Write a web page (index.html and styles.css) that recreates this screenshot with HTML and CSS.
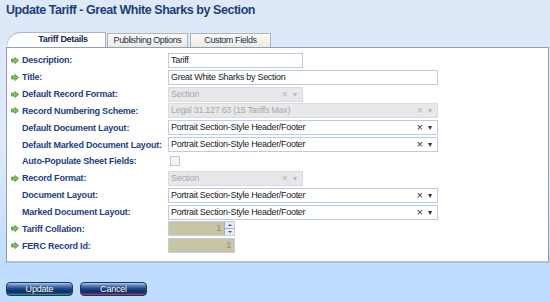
FILE: index.html
```html
<!DOCTYPE html>
<html>
<head>
  <title>Update Tariff</title>
  <link rel="stylesheet" href="styles.css">
</head>
<body>
  <div class="page">
    <h1 class="page-title">Update Tariff - Great White Sharks by Section</h1>

    <div class="tabs">
      <div class="tab tab-active">Tariff Details</div>
      <div class="tab">Publishing Options</div>
      <div class="tab">Custom Fields</div>
    </div>

    <div class="panel">
      <div class="form-row">
        <span class="req"><svg width="8" height="7" viewBox="0 0 8 7"><path d="M0.5 2h3.5V0.5l3.5 3-3.5 3V5H0.5z" fill="#7cc35a" stroke="#4f8f34" stroke-width="0.8"/></svg></span>
        <label>Description:</label>
        <div class="field"><div class="input short">Tariff</div></div>
      </div>
      <div class="form-row">
        <span class="req"><svg width="8" height="7" viewBox="0 0 8 7"><path d="M0.5 2h3.5V0.5l3.5 3-3.5 3V5H0.5z" fill="#7cc35a" stroke="#4f8f34" stroke-width="0.8"/></svg></span>
        <label>Title:</label>
        <div class="field"><div class="input wide">Great White Sharks by Section</div></div>
      </div>
      <div class="form-row">
        <span class="req"><svg width="8" height="7" viewBox="0 0 8 7"><path d="M0.5 2h3.5V0.5l3.5 3-3.5 3V5H0.5z" fill="#7cc35a" stroke="#4f8f34" stroke-width="0.8"/></svg></span>
        <label>Default Record Format:</label>
        <div class="field"><div class="input select short disabled"><span class="val">Section</span><span class="clr">×</span><span class="arr">▾</span></div></div>
      </div>
      <div class="form-row">
        <span class="req"><svg width="8" height="7" viewBox="0 0 8 7"><path d="M0.5 2h3.5V0.5l3.5 3-3.5 3V5H0.5z" fill="#7cc35a" stroke="#4f8f34" stroke-width="0.8"/></svg></span>
        <label>Record Numbering Scheme:</label>
        <div class="field"><div class="input select wide disabled"><span class="val">Legal 31.127.63 (15 Tariffs Max)</span><span class="clr">×</span><span class="arr">▾</span></div></div>
      </div>
      <div class="form-row">
        <span class="req"></span>
        <label>Default Document Layout:</label>
        <div class="field"><div class="input select wide"><span class="val">Portrait Section-Style Header/Footer</span><span class="clr">×</span><span class="arr">▾</span></div></div>
      </div>
      <div class="form-row">
        <span class="req"></span>
        <label>Default Marked Document Layout:</label>
        <div class="field"><div class="input select wide"><span class="val">Portrait Section-Style Header/Footer</span><span class="clr">×</span><span class="arr">▾</span></div></div>
      </div>
      <div class="form-row">
        <span class="req"></span>
        <label>Auto-Populate Sheet Fields:</label>
        <div class="field"><span class="checkbox"></span></div>
      </div>
      <div class="form-row">
        <span class="req"><svg width="8" height="7" viewBox="0 0 8 7"><path d="M0.5 2h3.5V0.5l3.5 3-3.5 3V5H0.5z" fill="#7cc35a" stroke="#4f8f34" stroke-width="0.8"/></svg></span>
        <label>Record Format:</label>
        <div class="field"><div class="input select short disabled"><span class="val">Section</span><span class="clr">×</span><span class="arr">▾</span></div></div>
      </div>
      <div class="form-row">
        <span class="req"></span>
        <label>Document Layout:</label>
        <div class="field"><div class="input select wide"><span class="val">Portrait Section-Style Header/Footer</span><span class="clr">×</span><span class="arr">▾</span></div></div>
      </div>
      <div class="form-row">
        <span class="req"></span>
        <label>Marked Document Layout:</label>
        <div class="field"><div class="input select wide"><span class="val">Portrait Section-Style Header/Footer</span><span class="clr">×</span><span class="arr">▾</span></div></div>
      </div>
      <div class="form-row">
        <span class="req"><svg width="8" height="7" viewBox="0 0 8 7"><path d="M0.5 2h3.5V0.5l3.5 3-3.5 3V5H0.5z" fill="#7cc35a" stroke="#4f8f34" stroke-width="0.8"/></svg></span>
        <label>Tariff Collation:</label>
        <div class="field"><div class="input number"><span class="num">1</span><span class="spin"><i class="up"></i><i class="down"></i></span></div></div>
      </div>
      <div class="form-row">
        <span class="req"><svg width="8" height="7" viewBox="0 0 8 7"><path d="M0.5 2h3.5V0.5l3.5 3-3.5 3V5H0.5z" fill="#7cc35a" stroke="#4f8f34" stroke-width="0.8"/></svg></span>
        <label>FERC Record Id:</label>
        <div class="field"><div class="input number"><span class="num">1</span></div></div>
      </div>
    </div>

    <div class="actions">
      <button class="btn btn-update">Update</button>
      <button class="btn btn-cancel">Cancel</button>
    </div>
  </div>
</body>
</html>
```

FILE: styles.css
```css
body {
  margin: 0;
  background: #c0dcfe;
  font-family: "Liberation Sans", Arial, sans-serif;
  font-size: 9px;
  letter-spacing: -0.3px;
}

.page {
  background: linear-gradient(to bottom, #dde9f9 0, #dde9f9 150px, #c0dcfe 263px);
  height: 302px;
}

.page-title {
  margin: 0;
  padding: 3px 0 0 6px;
  height: 29px;
  box-sizing: border-box;
  font-size: 12.5px;
  letter-spacing: -0.45px;
  font-weight: bold;
  color: #1f3d7c;
}

.tabs {
  display: flex;
  padding-left: 7px;
  height: 15px;
  align-items: flex-end;
  margin-top: 3px;
}

.tab {
  height: 14px;
  box-sizing: border-box;
  border: 1px solid #a9b6c6;
  border-bottom: none;
  background: linear-gradient(#fbfaf6, #ece9df);
  color: #1b2f55;
  text-align: center;
  line-height: 13px;
  margin-right: 2px;
  width: 81px;
  white-space: nowrap;
  letter-spacing: -0.4px;
}

.tab-active {
  position: relative;
  z-index: 1;
  width: 99px;
  height: 15px;
  background: #fff;
  font-weight: bold;
  color: #13294f;
  margin-right: 1px;
  padding-left: 14px;
  border-left: none;
  border-top-left-radius: 14px 15px;
  box-shadow: -1px 0 0 #c5d2e2;
  letter-spacing: -0.3px;
}

.panel {
  margin: 0 1px 0 6px;
  height: 216px;
  box-sizing: border-box;
  background: #fff;
  border: 1px solid #8da0b8;
  border-bottom: 2px solid #b0c2d8;
  padding: 4px 0 0 0;
}

.form-row {
  display: grid;
  grid-template-columns: 15px 146px 1fr;
  align-items: center;
  height: 16.85px;
}

.req {
  display: flex;
  padding-left: 4px;
}

.form-row label {
  font-weight: bold;
  color: #1d3d86;
  white-space: nowrap;
  letter-spacing: -0.2px;
}

.field {
  display: flex;
}

.input {
  height: 15px;
  box-sizing: border-box;
  border: 1px solid #bccde3;
  background: #fff;
  color: #222;
  padding: 0 2px;
  line-height: 13px;
  display: flex;
  align-items: center;
  white-space: nowrap;
}

.short {
  width: 135px;
}

.wide {
  width: 270px;
}

.select .val {
  flex: 1;
  overflow: hidden;
}

.select .clr {
  font-size: 11px;
  color: #333;
  width: 11px;
  text-align: center;
}

.select .arr {
  font-size: 8px;
  color: #333;
  width: 10px;
  text-align: center;
}

.disabled {
  background: #e8e8e8;
  border-color: #d2dbe7;
  color: #a9a9a9;
}

.disabled .clr,
.disabled .arr {
  color: #b8b8b8;
}

.checkbox {
  width: 10px;
  height: 10px;
  box-sizing: border-box;
  border: 1px solid #c4c8cc;
  background: #f4f4f4;
  margin-left: 2px;
}

.number {
  width: 67px;
  background: #c8c4a6;
  border-color: #c0cedf;
  color: #8f8c7c;
  padding: 0;
}

.number .num {
  flex: 1;
  text-align: right;
  padding-right: 3px;
}

.spin {
  width: 9px;
  height: 13px;
  display: flex;
  flex-direction: column;
  border-left: 1px solid #9fb0c6;
  background: #e6ecf4;
}

.spin i {
  flex: 1;
  position: relative;
}

.spin .up {
  border-bottom: 1px solid #9fb0c6;
}

.spin .up::after,
.spin .down::after {
  content: "";
  position: absolute;
  left: 2.5px;
  top: 2px;
  border-left: 2px solid transparent;
  border-right: 2px solid transparent;
}

.spin .up::after {
  border-bottom: 2px solid #555;
}

.spin .down::after {
  border-top: 2px solid #555;
}

.actions {
  display: flex;
  gap: 7px;
  padding: 19px 0 0 6px;
}

.btn {
  width: 67px;
  height: 14px;
  padding: 0;
  border: 1px solid #1b3463;
  border-radius: 4px;
  font-family: inherit;
  font-size: 9px;
  letter-spacing: -0.2px;
  line-height: 12px;
  color: #fff;
  text-shadow: 0 0 1px #0a1c3f;
  background: linear-gradient(#b4cbe9 0, #5e86bf 20%, #1c4184 50%, #0f2d66 75%, #123a7a 100%);
}

.btn-update {
  box-shadow: inset 0 -2px 2px -1px #3bb35a;
}

.btn-cancel {
  box-shadow: inset 0 -2px 2px -1px #c0503c;
}
```
